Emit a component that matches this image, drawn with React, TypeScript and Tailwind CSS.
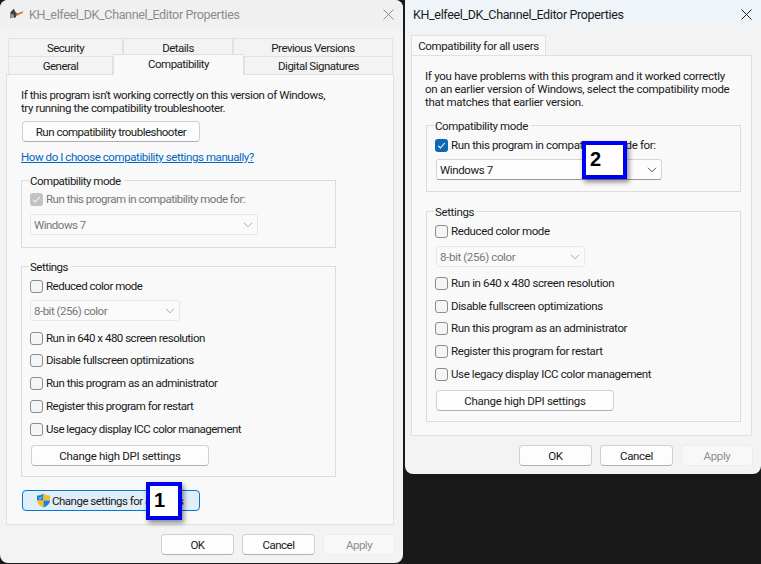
import { ReactNode } from "react";

function Btn({ children, className = "" }: { children: ReactNode; className?: string }) {
  return (
    <button className={`flex h-[21px] items-center justify-center whitespace-nowrap rounded-[4px] border border-[#d0d0d0] border-b-[#b0b0b0] bg-[#fdfdfd] pt-[1px] text-[#1a1a1a] ${className}`}>
      {children}
    </button>
  );
}

function Check({ label, state = "off", className = "" }: { label: string; state?: "off" | "on" | "disabled"; className?: string }) {
  return (
    <div className={`flex h-[14px] items-center ${className}`}>
      {state === "off" && <span className="h-[13px] w-[13px] rounded-[3px] border border-[#8c8c8c] bg-[#f5f5f5]" />}
      {state === "on" && (
        <span className="flex h-[13px] w-[13px] items-center justify-center rounded-[3px] bg-[#0f67b5]">
          <svg width="9" height="9" viewBox="0 0 9 9" fill="none" stroke="#fff" strokeWidth="1.1"><path d="M1.2 4.8 3.4 7l4.4-5" /></svg>
        </span>
      )}
      {state === "disabled" && (
        <span className="flex h-[13px] w-[13px] items-center justify-center rounded-[3px] bg-[#c2c2c2]">
          <svg width="9" height="9" viewBox="0 0 9 9" fill="none" stroke="#f4f4f4" strokeWidth="1.1"><path d="M1.2 4.8 3.4 7l4.4-5" /></svg>
        </span>
      )}
      <span className={`ml-[3px] whitespace-nowrap pt-[1px] ${state === "disabled" ? "text-[#767676]" : "text-[#1a1a1a]"}`}>{label}</span>
    </div>
  );
}

function Select({ value, disabled, className = "" }: { value: string; disabled?: boolean; className?: string }) {
  return (
    <div className={`flex h-[21px] items-center justify-between rounded-[3px] border pl-[3px] pr-[4px] ${disabled ? "border-[#e8e8e8] bg-[#fafafa] text-[#777]" : "border-[#d5d5d5] border-b-[#9a9a9a] bg-[#fdfdfd] text-[#1a1a1a]"} ${className}`}>
      <span className="pt-[1px]">{value}</span>
      <svg width="10" height="6" viewBox="0 0 10 6" fill="none" stroke={disabled ? "#a8a8a8" : "#555"} strokeWidth="1"><path d="M1 .8 5 4.8 9 .8" /></svg>
    </div>
  );
}

function Group({ title, className = "", children }: { title: string; className?: string; children: ReactNode }) {
  return (
    <div className={`relative border border-[#dcdcdc] ${className}`}>
      <span className="absolute left-[7px] top-[-6px] whitespace-nowrap bg-[#f9f9f9] pl-[1px] pr-[3px] text-[#1a1a1a]">{title}</span>
      {children}
    </div>
  );
}

function Shield() {
  return (
    <svg width="15" height="15" viewBox="0 0 15 15">
      <path d="M7.500.5C5.500 2 3.500 2.600 1 2.600V7.500h6.500z" fill="#1f7fd6" />
      <path d="M7.500.5C9.500 2 11.500 2.600 14 2.600V7.500H7.500z" fill="#f4c020" />
      <path d="M1 7.500c.2 3.400 2.600 5.600 6.500 7V7.500z" fill="#f4c020" />
      <path d="M14 7.500c-.2 3.400-2.600 5.600-6.500 7V7.500z" fill="#1f7fd6" />
      <path d="M2.800 4.800 4 6l2-2.400" fill="none" stroke="#cfe6fa" strokeWidth=".8" />
    </svg>
  );
}

function AppIcon() {
  return (
    <svg width="15" height="12" viewBox="0 0 15 12">
      <path d="M1.500 4 5 .8l1.500 3.400 2 1.300-2.300 4.500-2.200-1-3 1.200z" fill="#3f3f3f" />
      <path d="M6.500 6 14.500 3.300 13.500 5 7.500 8z" fill="#c9772c" />
      <circle cx="3" cy="8" r="2" fill="#9a9a9a" />
    </svg>
  );
}

function Badge({ n, className }: { n: string; className: string }) {
  return (
    <div className={`absolute flex items-center border-[4px] border-[#0000f0] bg-white pb-[2px] pl-[4px] font-['Liberation_Sans',sans-serif] text-[20px] font-bold tracking-normal text-black shadow-[2px_3px_5px_rgba(0,0,0,0.45)] ${className}`}>
      {n}
    </div>
  );
}

function Tab({ label, className = "" }: { label: string; className?: string }) {
  return (
    <div className={`flex h-[18px] items-center justify-center whitespace-nowrap border border-b-0 border-[#e2e2e2] bg-[#f3f3f3] pt-[1px] text-[#1a1a1a] ${className}`}>
      {label}
    </div>
  );
}

function LeftWindow() {
  return (
    <div className="absolute left-0 top-0 flex h-[563px] w-[403px] flex-col rounded-[8px] bg-[#f3f3f3] tracking-[-0.5px]">
      <div className="flex h-[28px] items-center rounded-t-[8px] bg-[#f0f0f0] px-[9px] text-[#8c8c8c]">
        <AppIcon />
        <span className="ml-[5px] text-[12.500px] tracking-[-0.35px]">KH_elfeel_DK_Channel_Editor Properties</span>
        <svg className="ml-auto" width="11" height="11" viewBox="0 0 11 11" stroke="#8c8c8c" strokeWidth="1"><path d="M.5.5l10 10M10.500.5l-10 10" /></svg>
      </div>
      <div className="ml-[8px] mt-[10px] h-[36px] w-[385px]">
        <div className="flex">
          <Tab label="Security" className="w-[115px]" />
          <Tab label="Details" className="w-[110px]" />
          <Tab label="Previous Versions" className="w-[160px]" />
        </div>
        <div className="flex">
          <Tab label="General" className="w-[105px]" />
          <div className="z-10 mt-[-2px] flex h-[21px] w-[131px] items-center justify-center border border-b-0 border-[#e0e0e0] bg-[#f9f9f9] pb-[1px] text-[#1a1a1a]">
            Compatibility
          </div>
          <Tab label="Digital Signatures" className="w-[149px]" />
        </div>
      </div>
      <div className="ml-[6px] flex h-[451px] w-[388px] flex-col border border-[#e0e0e0] bg-[#f9f9f9] pl-[14px] pt-[14px] text-[#1a1a1a]">
        <p className="whitespace-nowrap tracking-[-0.41px]">If this program isn't working correctly on this version of Windows,<br />try running the compatibility troubleshooter.</p>
        <Btn className="ml-[1px] mt-[6px] w-[178px]">Run compatibility troubleshooter</Btn>
        <a href="#" className="mt-[9px] tracking-[-0.42px] text-[#0067c0] underline">How do I choose compatibility settings manually?</a>
        <Group title="Compatibility mode" className="mt-[16px] h-[68px] w-[315px] pl-[8px] pt-[11px]">
          <Check label="Run this program in compatibility mode for:" state="disabled" />
          <Select value="Windows 7" disabled className="mt-[8px] w-[228px]" />
        </Group>
        <Group title="Settings" className="mt-[18px] h-[211px] w-[315px] pl-[8px] pt-[12px]">
          <Check label="Reduced color mode" />
          <Select value="8-bit (256) color" disabled className="mt-[7px] w-[150px]" />
          <Check label="Run in 640 x 480 screen resolution" className="mt-[10px]" />
          <Check label="Disable fullscreen optimizations" className="mt-[8px]" />
          <Check label="Run this program as an administrator" className="mt-[9px]" />
          <Check label="Register this program for restart" className="mt-[9px]" />
          <Check label="Use legacy display ICC color management" className="mt-[9px]" />
          <Btn className="ml-[1px] mt-[9px] w-[178px] tracking-[-0.3px]">Change high DPI settings</Btn>
        </Group>
        <button className="ml-[1px] mt-[13px] flex h-[21px] w-[178px] items-center whitespace-nowrap rounded-[4px] border border-[#0078d4] bg-[#e0eef9] pl-[13px] text-[#1a1a1a]">
          <Shield />
          <span className="ml-[1px] pt-[1px]">Change settings for all users</span>
        </button>
      </div>
      <div className="ml-[161px] mt-[9px] flex gap-[8px]">
        <Btn className="w-[73px]">OK</Btn>
        <Btn className="w-[73px]">Cancel</Btn>
        <div className="flex h-[21px] w-[72px] items-center justify-center rounded-[4px] border border-[#ececec] bg-[#f8f8f8] pt-[1px] text-[#8f8f8f]">Apply</div>
      </div>
      <Badge n="1" className="left-[146px] top-[482px] h-[38px] w-[36px]" />
    </div>
  );
}

function RightWindow() {
  return (
    <div className="absolute left-[405px] top-0 flex h-[474px] w-[356px] flex-col rounded-b-[8px] bg-[#f3f3f3] tracking-[-0.37px]">
      <div className="flex h-[28px] items-center bg-[#eff4f9] pl-[8px] pr-[9px] text-[#1a1a1a]">
        <span className="text-[12.500px] tracking-[-0.35px]">KH_elfeel_DK_Channel_Editor Properties</span>
        <svg className="ml-auto" width="11" height="11" viewBox="0 0 11 11" stroke="#222" strokeWidth="1"><path d="M.5.5l10 10M10.500.5l-10 10" /></svg>
      </div>
      <div className="ml-[6px] mt-[7px] flex h-[21px] w-[135px] items-center justify-center whitespace-nowrap border border-b-0 border-[#e0e0e0] bg-[#f9f9f9] text-[#1a1a1a]">
        Compatibility for all users
      </div>
      <div className="ml-[6px] mt-[-1px] flex h-[381px] w-[341px] flex-col border border-[#e0e0e0] bg-[#f9f9f9] pl-[13px] pt-[14px] text-[#1a1a1a]">
        <p className="whitespace-nowrap tracking-[-0.28px]">If you have problems with this program and it worked correctly<br />on an earlier version of Windows, select the compatibility mode<br />that matches that earlier version.</p>
        <Group title="Compatibility mode" className="ml-[1px] mt-[16px] h-[67px] w-[315px] pl-[8px] pt-[12px]">
          <Check label="Run this program in compatibility mode for:" state="on" />
          <Select value="Windows 7" className="ml-[1px] mt-[7px] w-[226px]" />
        </Group>
        <Group title="Settings" className="ml-[1px] mt-[19px] h-[211px] w-[315px] pl-[8px] pt-[12px]">
          <Check label="Reduced color mode" />
          <Select value="8-bit (256) color" disabled className="ml-[1px] mt-[8px] w-[149px]" />
          <Check label="Run in 640 x 480 screen resolution" className="mt-[9px]" />
          <Check label="Disable fullscreen optimizations" className="mt-[9px]" />
          <Check label="Run this program as an administrator" className="mt-[8px]" />
          <Check label="Register this program for restart" className="mt-[9px]" />
          <Check label="Use legacy display ICC color management" className="mt-[9px]" />
          <Btn className="ml-[1px] mt-[9px] w-[178px] tracking-[-0.3px]">Change high DPI settings</Btn>
        </Group>
      </div>
      <div className="ml-[114px] mt-[9px] flex gap-[8px]">
        <Btn className="w-[73px] border-[#0067c0] border-b-[#0067c0]">OK</Btn>
        <Btn className="w-[73px]">Cancel</Btn>
        <div className="flex h-[21px] w-[72px] items-center justify-center rounded-[4px] border border-[#ececec] bg-[#f8f8f8] pt-[1px] text-[#8f8f8f]">Apply</div>
      </div>
      <Badge n="2" className="left-[177px] top-[141px] h-[38px] w-[45px]" />
    </div>
  );
}

export default function App() {
  return (
    <div className="relative h-[564px] w-[761px] overflow-hidden bg-[#191919] font-['Roboto',sans-serif] text-[11.500px] leading-[13px]">
      <LeftWindow />
      <RightWindow />
    </div>
  );
}
